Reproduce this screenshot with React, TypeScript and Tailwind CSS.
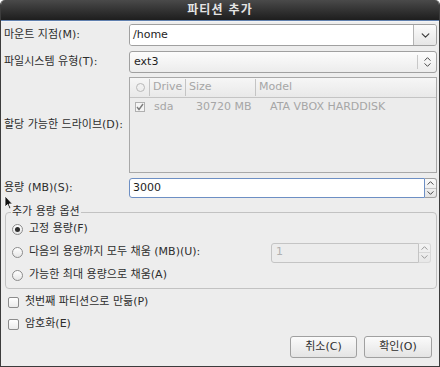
import React from 'react';

const font = "font-['DejaVu_Sans','Noto_Sans_CJK_KR',sans-serif]";

const Chevron: React.FC<{ dir: 'up' | 'down'; size?: number }> = ({ dir, size = 9 }) => (
  <svg width={size} height={Math.round(size * 0.6)} viewBox="0 0 10 6" fill="none">
    <path
      d={dir === 'down' ? 'M1 1 L5 5 L9 1' : 'M1 5 L5 1 L9 5'}
      stroke="#3a3a3a"
      strokeWidth="1.4"
      strokeLinecap="round"
      strokeLinejoin="round"
    />
  </svg>
);

const Radio: React.FC<{ checked?: boolean }> = ({ checked }) => (
  <span className="w-[11px] h-[11px] rounded-full border border-[#8c8c8c] bg-gradient-to-b from-[#ffffff] to-[#e6e6e6] flex items-center justify-center shrink-0">
    {checked && <span className="w-[5px] h-[5px] rounded-full bg-[#2e2e2e]" />}
  </span>
);

const Check: React.FC = () => (
  <span className="w-[11px] h-[11px] border border-[#8c8c8c] bg-gradient-to-b from-[#ffffff] to-[#ebebeb] rounded-[2px] shrink-0" />
);

const SpinButtons: React.FC<{ disabled?: boolean }> = ({ disabled }) => (
  <div className={`w-[12px] flex flex-col border border-l-0 rounded-r-[3px] ${disabled ? 'border-[#c4c4c4] opacity-50' : 'border-[#a0a0a0]'} bg-gradient-to-b from-[#fafafa] to-[#e4e4e4]`}>
    <div className="flex-1 flex items-center justify-center border-b border-[#c4c4c4]">
      <Chevron dir="up" size={7} />
    </div>
    <div className="flex-1 flex items-center justify-center">
      <Chevron dir="down" size={7} />
    </div>
  </div>
);

const Label: React.FC<{ children: React.ReactNode }> = ({ children }) => (
  <div className="w-[125px] shrink-0 text-[11px] text-[#2e2e2e]">{children}</div>
);

export default function App() {
  return (
    <div className={`w-[440px] h-[367px] bg-white ${font}`}>
      <div className="w-full h-full flex flex-col rounded-t-[5px] overflow-hidden border-x border-b border-[#3c3c3c]">
        <div className="h-[20px] shrink-0 bg-gradient-to-b from-[#4a4a4a] to-[#1e1e1e] flex items-center justify-center text-[12px] font-bold text-[#e4e4e4] tracking-[1px]">
          파티션 추가
        </div>
        <div className="h-[1px] bg-[#5f7fae]" />
        <div className="h-[1px] bg-[#f4f4f4]" />

        <div className="relative flex-1 bg-[#ededed] pl-[3px] pr-[2px] flex flex-col">
          {/* mount point */}
          <div className="mt-[2px] h-[22px] flex items-center">
            <Label>마운트 지점(M):</Label>
            <div className="flex-1 h-full flex rounded-[3px] border border-[#a0a0a0] overflow-hidden">
              <div className="flex-1 bg-white flex items-center pl-[3px] text-[11px] text-[#1e1e1e]">/home</div>
              <div className="w-[23px] border-l border-[#b4b4b4] bg-gradient-to-b from-[#fbfbfb] to-[#e6e6e6] flex items-center justify-center">
                <Chevron dir="down" />
              </div>
            </div>
          </div>

          {/* filesystem */}
          <div className="mt-[5px] h-[22px] flex items-center">
            <Label>파일시스템 유형(T):</Label>
            <div className="flex-1 h-full flex items-center rounded-[3px] border border-[#a0a0a0] bg-gradient-to-b from-[#fcfcfc] to-[#ececec]">
              <div className="flex-1 pl-[4px] text-[11px] text-[#1e1e1e]">ext3</div>
              <div className="w-px h-[14px] bg-[#c8c8c8]" />
              <div className="w-[18px] flex flex-col items-center gap-[2px]">
                <Chevron dir="up" size={7} />
                <Chevron dir="down" size={7} />
              </div>
            </div>
          </div>

          {/* drives */}
          <div className="mt-[4px] h-[96px] flex items-center">
            <Label>할당 가능한 드라이브(D):</Label>
            <div className="flex-1 h-full border border-[#a8a8a8] bg-[#ececec] text-[11px] text-[#a6a6a6] flex flex-col">
              <div className="h-[20px] flex items-center border-b border-[#c4c4c4] bg-gradient-to-b from-[#f6f6f6] to-[#e9e9e9]">
                <div className="w-[19px] flex justify-center pl-[1px]">
                  <span className="w-[9px] h-[9px] rounded-full border border-[#b8b8b8]" />
                </div>
                <div className="w-[36px] border-l border-[#c4c4c4] pl-[3px]">Drive</div>
                <div className="w-[70px] border-l border-[#c4c4c4] pl-[3px]">Size</div>
                <div className="flex-1 border-l border-[#c4c4c4] pl-[3px]">Model</div>
              </div>
              <div className="h-[18px] flex items-center">
                <div className="w-[19px] flex justify-center">
                  <span className="w-[10px] h-[10px] border border-[#b0b0b0] bg-[#f4f4f4] flex items-center justify-center">
                    <svg width="8" height="8" viewBox="0 0 8 8">
                      <path d="M1 4 L3 6.5 L7 1" stroke="#7c7c7c" strokeWidth="1.4" fill="none" />
                    </svg>
                  </span>
                </div>
                <div className="w-[47px] pl-[5px]">sda</div>
                <div className="w-[74px]">30720 MB</div>
                <div className="flex-1">ATA VBOX HARDDISK</div>
              </div>
            </div>
          </div>

          {/* size */}
          <div className="mt-[5px] h-[20px] flex items-center">
            <Label>용량 (MB)(S):</Label>
            <div className="flex-1 h-full flex">
              <div className="flex-1 bg-white border border-[#6d8fc4] rounded-l-[3px] flex items-center pl-[3px] text-[11px] text-[#1e1e1e]">3000</div>
              <SpinButtons />
            </div>
          </div>

          {/* additional size options */}
          <fieldset className="mt-[8px] ml-[1px] border border-[#c2c2c2] rounded-[4px] px-[6px] pb-[1px]">
            <legend className="text-[11px] text-[#2e2e2e] ml-[-1px] px-[1px] leading-[12px]">추가 용량 옵션</legend>
            <div className="h-[23px] flex items-center gap-[6px] text-[11px] text-[#2e2e2e]">
              <Radio checked />
              고정 용량(F)
            </div>
            <div className="h-[23px] flex items-center gap-[6px] text-[11px] text-[#2e2e2e]">
              <Radio />
              <span className="flex-1">다음의 용량까지 모두 채움 (MB)(U):</span>
              <div className="w-[160px] h-[20px] flex mr-[-1px]">
                <div className="flex-1 border border-[#c4c4c4] rounded-l-[3px] bg-[#ececec] flex items-center pl-[4px] text-[#b0b0b0]">1</div>
                <SpinButtons disabled />
              </div>
            </div>
            <div className="h-[23px] flex items-center gap-[6px] text-[11px] text-[#2e2e2e]">
              <Radio />
              가능한 최대 용량으로 채움(A)
            </div>
          </fieldset>

          <div className="mt-[2px] h-[22px] flex items-center gap-[6px] pl-[4px] text-[11px] text-[#2e2e2e]">
            <Check />
            첫번째 파티션으로 만듦(P)
          </div>
          <div className="h-[22px] flex items-center gap-[6px] pl-[4px] text-[11px] text-[#2e2e2e]">
            <Check />
            암호화(E)
          </div>

          <div className="mt-[1px] h-[22px] flex justify-end gap-[7px] pr-[5px] text-[11px] text-[#2e2e2e]">
            <button className="w-[67px] h-full rounded-[3px] border border-[#a0a0a0] bg-gradient-to-b from-[#fbfbfb] to-[#e4e4e4]">취소(C)</button>
            <button className="w-[68px] h-full rounded-[3px] border border-[#a0a0a0] bg-gradient-to-b from-[#fbfbfb] to-[#e4e4e4]">확인(O)</button>
          </div>

          {/* mouse pointer */}
          <svg className="absolute left-[3px] top-[173px]" width="10" height="15" viewBox="0 0 10 15">
            <path d="M1 1 L1 12 L3.5 9.5 L5.5 14 L7 13.3 L5 9 L8.5 9 Z" fill="#111" stroke="#fff" strokeWidth="0.8" />
          </svg>
        </div>
      </div>
    </div>
  );
}
